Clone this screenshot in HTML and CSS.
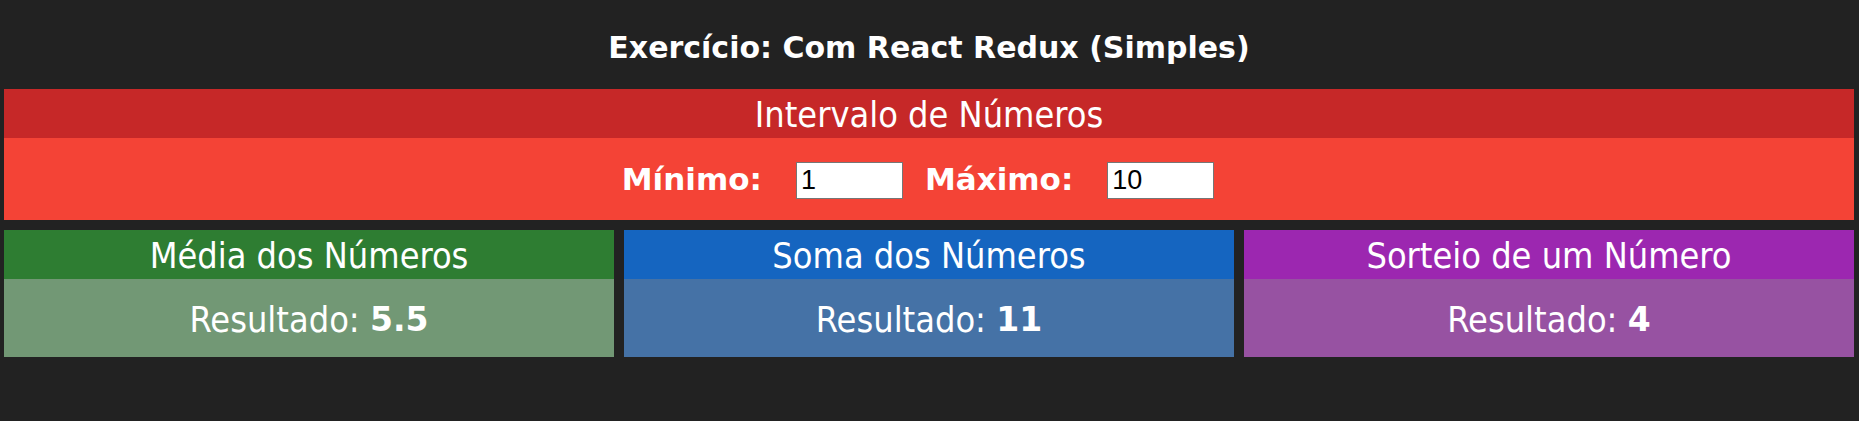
FILE: index.html
```html
<!DOCTYPE html>
<html lang="pt-BR">
<head>
<meta charset="utf-8">
<title>Exercício React Redux</title>
<link rel="stylesheet" href="styles.css">
</head>
<body>
<div class="app">
  <h1 class="title">Exercício: Com React Redux (Simples)</h1>
  <div class="line">
    <div class="card card-red card-wide">
      <div class="card-header">Intervalo de Números</div>
      <div class="card-body interval">
        <span class="field-label">Mínimo:</span>
        <input class="field-input" type="number" value="1">
        <span class="field-label">Máximo:</span>
        <input class="field-input" type="number" value="10">
      </div>
    </div>
  </div>
  <div class="line cols">
    <div class="card card-green">
      <div class="card-header">Média dos Números</div>
      <div class="card-body result">Resultado: <strong>5.5</strong></div>
    </div>
    <div class="card card-blue">
      <div class="card-header">Soma dos Números</div>
      <div class="card-body result">Resultado: <strong>11</strong></div>
    </div>
    <div class="card card-purple">
      <div class="card-header">Sorteio de um Número</div>
      <div class="card-body result">Resultado: <strong>4</strong></div>
    </div>
  </div>
</div>
</body>
</html>
```
FILE: styles.css
```css
html, body {
  margin: 0;
  padding: 0;
  background: #222222;
}

body {
  font-family: "DejaVu Sans", Verdana, sans-serif;
  color: #ffffff;
}

.app {
  display: flex;
  flex-direction: column;
  padding: 0 5px 0 4px;
}

.title {
  margin: 30px 0 24px 0;
  font-size: 30px;
  font-weight: bold;
  line-height: 35px;
  text-align: center;
}

.line {
  display: flex;
}

.cols {
  margin-top: 10px;
  gap: 10px;
}

.card {
  flex: 1 1 0;
  display: flex;
  flex-direction: column;
}

.card-header {
  height: 49px;
  display: flex;
  align-items: center;
  justify-content: center;
  font-family: "DejaVu Sans Condensed", "DejaVu Sans", sans-serif;
  font-size: 35.8px;
  line-height: 40px;
  padding-top: 2px;
  box-sizing: border-box;
}

.card-body {
  display: flex;
  align-items: center;
  justify-content: center;
}

.interval {
  height: 82px;
}

.result {
  height: 78px;
  font-family: "DejaVu Sans Condensed", "DejaVu Sans", sans-serif;
  font-size: 35.8px;
  white-space: pre;
  padding-top: 3px;
  box-sizing: border-box;
}

.result strong {
  font-family: "DejaVu Sans", Verdana, sans-serif;
  font-size: 33px;
  font-weight: bold;
}

.field-label {
  font-size: 31px;
  font-weight: bold;
}

.field-input {
  width: 107px;
  height: 37px;
  box-sizing: border-box;
  margin: 3px 22px 0 34px;
  padding: 0 4px;
  border: 1px solid #767676;
  background: #ffffff;
  color: #000000;
  font-family: "Liberation Sans", Arial, sans-serif;
  font-size: 27px;
  -moz-appearance: textfield;
  appearance: textfield;
}

.field-input::-webkit-outer-spin-button,
.field-input::-webkit-inner-spin-button {
  -webkit-appearance: none;
  margin: 0;
}

.card-red .card-header { background: #c62828; }
.card-red .card-body { background: #f44336; }

.card-green .card-header { background: #2e7d32; }
.card-green .card-body { background: #729875; }

.card-blue .card-header { background: #1565c0; }
.card-blue .card-body { background: #4572a6; }

.card-purple .card-header { background: #9c27b0; }
.card-purple .card-body { background: #9752a2; }
```
